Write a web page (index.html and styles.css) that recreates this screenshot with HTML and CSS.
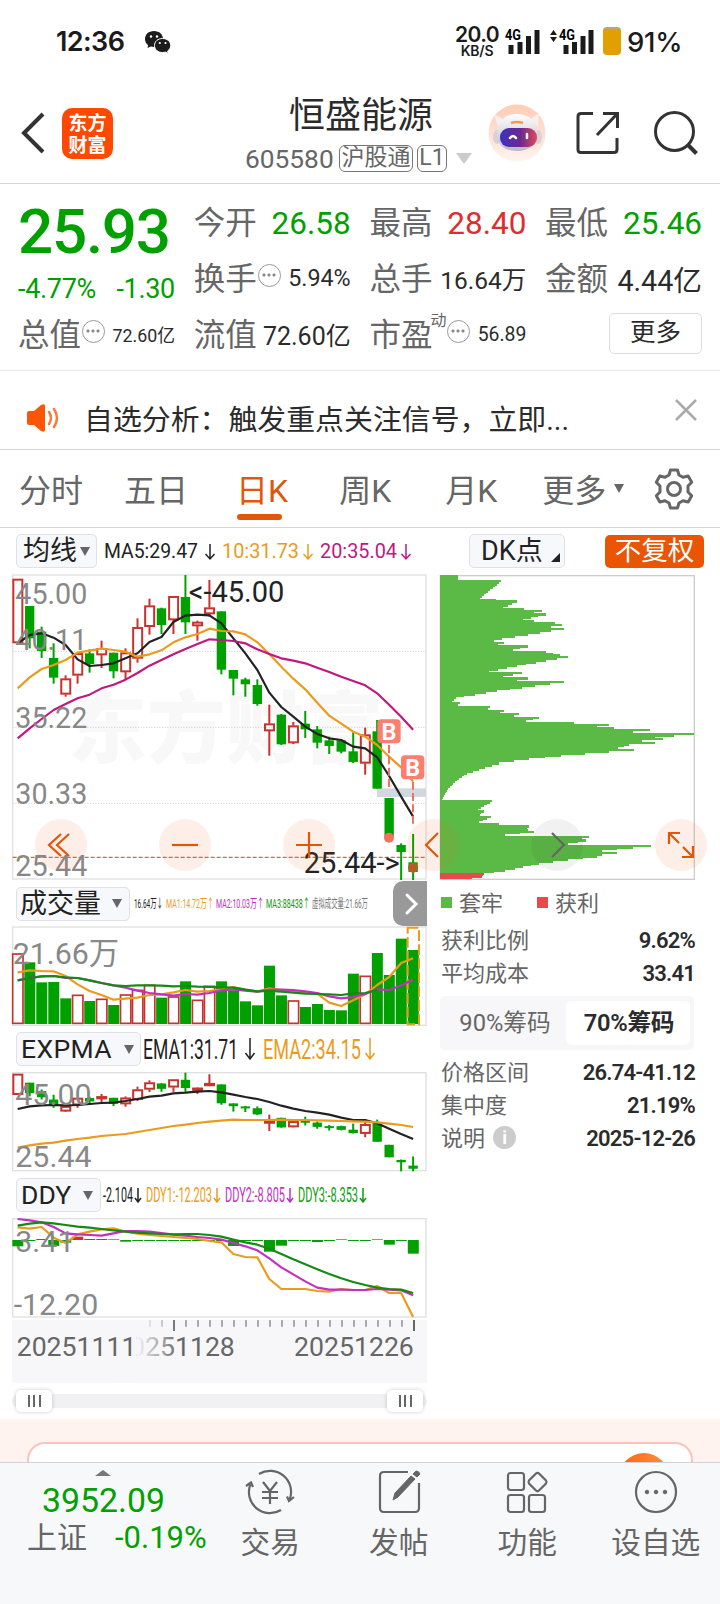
FILE: index.html
```html
<!DOCTYPE html>
<html lang="zh-CN">
<head>
    <meta charset="UTF-8">
    <meta name="viewport" content="width=device-width, initial-scale=1.0">
    <title>恒盛能源 605580</title>
    <link rel="stylesheet" href="styles.css">
</head>
<body>
    <div class="status-bar">
        <span class="clock">12:36</span>
        <svg class="wechat" width="28" height="24" viewBox="0 0 28 24">
            <path fill="#1b1b1b" d="M10 1C4.500 1 1 4.600 1 9c0 2.600 1.200 4.700 3.200 6.200L3.500 18l3.300-1.500c1 .3 2 .5 3.200.5 5.500 0 9-3.600 9-8s-3.500-8-9-8z"/>
            <path fill="#1b1b1b" stroke="#fff" stroke-width="1" d="M18.500 8.500c-4.700 0-8 3-8 7s3.300 7 8 7c1 0 2-.2 2.800-.4l3 1.400-.7-2.500c1.900-1.300 3.100-3.200 3.100-5.500 0-4-3.500-7-8.200-7z"/>
            <g fill="#fff"><circle cx="7" cy="6.500" r="1.200"/><circle cx="13" cy="6.500" r="1.200"/><circle cx="15.800" cy="13" r="1.100"/><circle cx="21.500" cy="13" r="1.100"/></g>
        </svg>
        <div class="speed"><b>20.0</b><i>KB/S</i></div>
        <svg class="signal" width="36" height="30" viewBox="0 0 36 30">
            <text x="0" y="13" textLength="16" lengthAdjust="spacingAndGlyphs">4G</text>
            <path d="M6 18v9M15 15v12M23.500 9v18M32 3v24"/>
        </svg>
        <svg class="signal signal2" width="46" height="30" viewBox="0 0 46 30">
            <path class="tri" d="M1 8l3.500-5L8 8zM1 10h7l-3.500 5z"/>
            <text x="10" y="13" textLength="16" lengthAdjust="spacingAndGlyphs">4G</text>
            <path d="M17 18v9M25.500 15v12M34 9v18M42 3v24"/>
        </svg>
        <div class="battery"></div>
        <span class="percent">91%</span>
    </div>

    <div class="header">
        <svg class="back" width="26" height="44" viewBox="0 0 26 44"><path d="M23 3L4 22l19 19"/></svg>
        <div class="logo">东方<br>财富</div>
        <div class="title">
            <h1>恒盛能源</h1>
            <p><span>605580</span><em>沪股通</em><em class="lv">L1</em><i class="drop"></i></p>
        </div>
        <svg class="robot" width="58" height="58" viewBox="0 0 58 58">
            <defs>
                <linearGradient id="halo" x1="0" y1="0" x2="0" y2="1"><stop offset="0" stop-color="#ffccb5"/><stop offset="1" stop-color="#fff4ef"/></linearGradient>
                <linearGradient id="visor"><stop offset="0" stop-color="#3f2fc0"/><stop offset=".55" stop-color="#6a2a90"/><stop offset="1" stop-color="#e04858"/></linearGradient>
                <linearGradient id="helmet" x1="0" y1="0" x2="0" y2="1"><stop offset="0" stop-color="#fff"/><stop offset="1" stop-color="#b9b8c6"/></linearGradient>
            </defs>
            <circle cx="29" cy="29" r="28.500" fill="url(#halo)"/>
            <path fill="#f4eff2" d="M10 22L6 10l9 5zM43 15l8-6-1 14z"/>
            <ellipse cx="9" cy="33" rx="4" ry="7" fill="#d8d0da"/><ellipse cx="50" cy="33" rx="4" ry="7" fill="#d8d0da"/>
            <path fill="url(#helmet)" d="M29 10c13 0 20 8 20 20 0 10-7 17-20 17S9 40 9 30c0-12 7-20 20-20z"/>
            <rect x="12" y="24" width="37" height="19" rx="9" fill="url(#visor)"/>
            <path d="M23 19q6-2 12 0" stroke="#f39a50" stroke-width="2.500" fill="none"/>
            <path d="M22 34q3-4 6 0M39 30v4" stroke="#fff" stroke-width="2.500" fill="none" stroke-linecap="round"/>
        </svg>
        <svg class="line-icon share" width="44" height="44" viewBox="0 0 44 44"><path d="M17 2.500H5q-3 0-3 3v33q0 3 3 3h33q3 0 3-3V27M27 2.500h14.500V17M41 3L21 24"/></svg>
        <svg class="line-icon" width="46" height="46" viewBox="0 0 46 46"><circle cx="21.500" cy="21.500" r="19"/><path d="M35 35l8.500 8.500" stroke-width="4"/></svg>
    </div>

    <div class="quote">
        <div class="price-box">
            <div class="price">25.93</div>
            <div class="change"><span>-4.77%</span><span>-1.30</span></div>
        </div>
        <div class="cell"><label>今开</label><b class="down s31">26.58</b></div>
        <div class="cell"><label>最高</label><b class="up s31">28.40</b></div>
        <div class="cell"><label>最低</label><b class="down s31">25.46</b></div>
        <div class="cell"><label>换手</label><i class="dots"></i><b class="s23">5.94%</b></div>
        <div class="cell"><label>总手</label><b class="s24">16.64万</b></div>
        <div class="cell"><label>金额</label><b class="s28">4.44亿</b></div>
        <div class="cell"><label>总值</label><i class="dots"></i><b class="s18">72.60亿</b></div>
        <div class="cell"><label>流值</label><b class="s25">72.60亿</b></div>
        <div class="cell"><label>市盈</label><sup>动</sup><i class="dots"></i><b class="s19">56.89</b></div>
        <div class="cell end"><button class="more">更多</button></div>
    </div>

    <div class="notice">
        <svg width="34" height="28" viewBox="0 0 34 28">
            <path fill="#fb5607" d="M1 9q0-2 2-2h5l7-6q4-2 4 1v24q0 3-4 1l-7-6H3q-2 0-2-2z"/>
            <path fill="none" stroke="#fb7a3c" stroke-width="2.500" stroke-linecap="round" d="M23 8q4 6 0 12M28 5q6 9 0 18"/>
        </svg>
        <span>自选分析：触发重点关注信号，立即...</span>
        <svg class="close" width="24" height="24" viewBox="0 0 24 24"><path d="M2 2l20 20M22 2L2 22"/></svg>
    </div>

    <div class="tabs">
        <a>分时</a><a>五日</a><a class="active">日K</a><a>周K</a><a>月K</a><a>更多<i></i></a>
        <svg class="gear" width="40" height="42" viewBox="0 0 40 42">
            <path d="M15 7l1.500-5h7L25 7l4 2.300 5.200-1.300 3.500 6.200-3.700 3.800v6l3.700 3.800-3.500 6.200-5.200-1.300L25 35l-1.500 5h-7L15 35l-4-2.300L5.800 34l-3.500-6.200L6 24v-6l-3.700-3.800L5.800 8 11 9.300z"/>
            <circle cx="20" cy="21" r="6.500"/>
        </svg>
    </div>

    <div class="toolbar top">
        <button class="pick pick-ma">均线<i></i></button>
        <svg class="labels" width="320" height="34" viewBox="0 0 320 34">
            <text x="7" y="24" textLength="94" lengthAdjust="spacingAndGlyphs" fill="#222">MA5:29.47</text>
            <text x="125" y="24" textLength="77" lengthAdjust="spacingAndGlyphs" fill="#eb9b1c">10:31.73</text>
            <text x="223" y="24" textLength="77" lengthAdjust="spacingAndGlyphs" fill="#c0187f">20:35.04</text>
            <path stroke="#222" d="M113 10v15M108.500 20l4.500 5 4.500-5"/>
            <path stroke="#eb9b1c" d="M211 10v15M206.500 20l4.500 5 4.500-5"/>
            <path stroke="#c0187f" d="M309 10v15M304.500 20l4.500 5 4.500-5"/>
        </svg>
        <button class="pick pick-dk">DK点<i></i></button>
        <button class="adjust">不复权</button>
    </div>

    <div class="charts">
        <div class="left">
            <svg id="kline" width="430" height="310" viewBox="0 0 1290 930"></svg>
            <div class="toolbar vol-bar">
                <button class="pick pick-vol">成交量<i></i></button>
                <svg class="labels" width="240" height="34" viewBox="0 0 240 34">
                    <g font-size="12.500">
                        <text x="4" y="21" textLength="29" lengthAdjust="spacingAndGlyphs" fill="#222">16.64万↓</text>
                        <text x="36" y="21" textLength="48" lengthAdjust="spacingAndGlyphs" fill="#eb9b1c">MA1:14.72万↑</text>
                        <text x="86" y="21" textLength="48" lengthAdjust="spacingAndGlyphs" fill="#c22fc2">MA2:10.03万↑</text>
                        <text x="136" y="21" textLength="44" lengthAdjust="spacingAndGlyphs" fill="#119a11">MA3:88438↑</text>
                        <text x="182" y="21" textLength="56" lengthAdjust="spacingAndGlyphs" fill="#777">虚拟成交量:21.66万</text>
                    </g>
                </svg>
                <div class="next"><svg width="16" height="24" viewBox="0 0 16 24"><path d="M3 3l9 9-9 9"/></svg></div>
            </div>
            <svg id="volume" width="430" height="103" viewBox="0 150 1290 309"></svg>
            <div class="toolbar exp-bar">
                <button class="pick pick-exp">EXPMA<i></i></button>
                <svg class="labels" width="250" height="34" viewBox="0 0 250 34">
                    <g font-size="28.500">
                        <text x="2" y="27" textLength="95" lengthAdjust="spacingAndGlyphs" fill="#222">EMA1:31.71</text>
                        <text x="122" y="27" textLength="98" lengthAdjust="spacingAndGlyphs" fill="#eb9b1c">EMA2:34.15</text>
                    </g>
                    <path stroke="#222" stroke-width="2" d="M109 6v21M104.500 21l4.500 6 4.500-6"/>
                    <path stroke="#eb9b1c" stroke-width="2" d="M229 6v21M224.500 21l4.500 6 4.500-6"/>
                </svg>
            </div>
            <svg id="expma" width="430" height="102" viewBox="0 120 1290 306"></svg>
            <div class="toolbar ddy-bar">
                <button class="pick pick-ddy">DDY<i></i></button>
                <svg class="labels" width="280" height="34" viewBox="0 0 280 34">
                    <g font-size="20">
                        <text x="2" y="24" textLength="30" lengthAdjust="spacingAndGlyphs" fill="#222">-2.104</text>
                        <text x="45" y="24" textLength="66" lengthAdjust="spacingAndGlyphs" fill="#eb9b1c">DDY1:-12.203</text>
                        <text x="124" y="24" textLength="60" lengthAdjust="spacingAndGlyphs" fill="#c22fc2">DDY2:-8.805</text>
                        <text x="197" y="24" textLength="60" lengthAdjust="spacingAndGlyphs" fill="#119a11">DDY3:-8.353</text>
                    </g>
                    <path stroke="#222" d="M37 10v14M34 20l3 4 3-4"/>
                    <path stroke="#eb9b1c" d="M116 10v14M113 20l3 4 3-4"/>
                    <path stroke="#c22fc2" d="M189 10v14M186 20l3 4 3-4"/>
                    <path stroke="#119a11" d="M262 10v14M259 20l3 4 3-4"/>
                </svg>
            </div>
            <svg id="ddy" width="430" height="103" viewBox="0 33 1290 309"></svg>
            <svg id="axis" width="430" height="65" viewBox="0 342 1290 195"></svg>
            <div class="slider"><span class="handle"><i></i></span><span class="handle"><i></i></span></div>
        </div>

        <div class="right">
            <svg id="chips" width="290" height="310" viewBox="15 150 870 930"></svg>
            <div class="legend"><i class="g"></i><span>套牢</span><i class="r"></i><span>获利</span></div>
            <dl>
                <dt>获利比例</dt><dd>9.62%</dd>
                <dt>平均成本</dt><dd>33.41</dd>
            </dl>
            <div class="switch"><span>90%筹码</span><span class="on">70%筹码</span></div>
            <dl>
                <dt>价格区间</dt><dd>26.74-41.12</dd>
                <dt>集中度</dt><dd>21.19%</dd>
                <dt>说明<i class="info">i</i></dt><dd>2025-12-26</dd>
            </dl>
        </div>

        <div class="controls">
            <span><svg viewBox="0 0 52 52"><path d="M26 15L14 26l12 11M34 15L22 26l12 11"/></svg></span>
            <span><svg viewBox="0 0 52 52"><path d="M13 26h26"/></svg></span>
            <span><svg viewBox="0 0 52 52"><path d="M13 26h26M26 13v26"/></svg></span>
            <span><svg viewBox="0 0 52 52"><path d="M31 14L19 26l12 12"/></svg></span>
            <span class="gray"><svg viewBox="0 0 52 52"><path d="M21 14l12 12-12 12"/></svg></span>
            <span><svg viewBox="0 0 52 52"><path d="M14 25V14h11M14 14l10 10M38 27v11H27M38 38L28 28" stroke-width="2.500"/></svg></span>
        </div>
    </div>

    <div class="promo"><div class="promo-card"><i></i></div></div>

    <div class="bottom">
        <div class="index">
            <i class="arrow-up"></i>
            <div class="point">3952.09</div>
            <div class="rate"><span>上证</span><b>-0.19%</b></div>
        </div>
        <div class="nav">
            <svg width="50" height="46" viewBox="0 0 50 46"><path d="M14 5A21 21 0 0 1 44.700 30.300M36 41A21 21 0 0 1 5.300 15.700M1 17l5-3.500 2 4.500M49 28l-5 4-2-4.500M18 13l7 9 7-9M17 23h16M17 29h16M25 22v13"/></svg>
            交易
        </div>
        <div class="nav">
            <svg width="46" height="46" viewBox="0 0 46 46"><path d="M32 3H8q-4 0-4 4v32q0 4 4 4h31q4 0 4-4V14"/><path class="fill" d="M17 31l2-7L35 7l4 3-17 18zM37 5l3-3q3 0 4 3l-3 3z"/></svg>
            发帖
        </div>
        <div class="nav">
            <svg width="46" height="46" viewBox="0 0 46 46"><rect x="4" y="4" width="16" height="17" rx="2.500"/><rect x="4" y="26" width="16" height="17" rx="2.500"/><rect x="25" y="26" width="16" height="17" rx="2.500"/><path d="M32 4.500q1.500-1.500 3 0l7 7q1 1.500 0 3l-7 7q-1.500 1.500-3 0l-7-7q-1-1.500 0-3z"/></svg>
            功能
        </div>
        <div class="nav">
            <svg width="46" height="46" viewBox="0 0 46 46"><circle cx="23" cy="23" r="20"/><g class="fill"><circle cx="14" cy="23" r="1.800"/><circle cx="23" cy="23" r="1.800"/><circle cx="32" cy="23" r="1.800"/></g></svg>
            设自选
        </div>
    </div>

    <script src="script.js"></script>
</body>
</html>
```
FILE: styles.css
```css
* {
    box-sizing: border-box;
}

body {
    margin: 0;
    width: 720px;
    height: 1604px;
    overflow: hidden;
    background: #fff;
    color: #2b2b2b;
    font-family: Roboto, "Noto Sans CJK SC", sans-serif;
}

svg { display: block; flex: none; }
i, em { font-style: normal; }
button { font-family: inherit; padding: 0; }

/* 状态栏 */
.status-bar {
    height: 84px;
    padding: 0 37px 0 56px;
    display: flex;
    align-items: center;
    color: #1b1b1b;
}
.clock { font: 600 27px/30px Inter, sans-serif; letter-spacing: -0.6px; width: 88px; }
.wechat { margin-right: auto; }
.speed { text-align: center; width: 46px; margin-right: 5px; }
.speed b { display: block; font: 600 21px/16px Inter, sans-serif; letter-spacing: -0.6px; }
.speed i { display: block; font: 600 14px/15px Inter, sans-serif; letter-spacing: -0.2px; }
.signal path { stroke: #1b1b1b; stroke-width: 5; }
.signal path.tri { stroke: none; fill: #1b1b1b; }
.signal text { font: 700 14px Roboto, sans-serif; }
.signal { margin-right: 8px; margin-top: -1px; }
.battery {
    width: 18px;
    height: 28px;
    background: #e2a000;
    border-radius: 4px;
    border-top: 2px solid #b5a57c;
    margin-top: -2px;
}
.percent { margin-left: 6px; font: 500 27.500px/30px Inter, sans-serif; letter-spacing: -0.3px; width: 56px; }

/* 标题栏 */
.header {
    height: 100px;
    border-bottom: 1px solid #d4d4d4;
    display: flex;
    align-items: center;
    padding: 0 22px 0 20px;
    position: relative;
}
.header > svg, .logo { margin-top: -1px; flex: none; }
.back path { fill: none; stroke: #333; stroke-width: 4; }
.logo {
    width: 51px;
    height: 51px;
    margin-left: 16px;
    border-radius: 10px;
    background: #ff4800;
    color: #fff;
    text-align: center;
    padding-top: 3px;
    font: 700 19px/22px "Noto Sans CJK SC", sans-serif;
}
.title {
    width: 240px;
    margin-left: 127px;
    margin-right: 8px;
    text-align: center;
    flex: none;
}
.title h1 { margin: 5px 0 0; font-size: 36px; line-height: 42px; font-weight: 400; padding-left: 2px; }
.title p { margin: 7px 0 4px 5px; display: flex; align-items: center; color: #666; font-size: 26.300px; line-height: 30px; height: 30px; }
.title span { width: 93px; text-align: left; }
.title em {
    height: 27px;
    width: 74px;
    line-height: 24px;
    font-size: 23px;
    border: 1px solid #777;
    border-radius: 6px;
    margin-right: 4px;
    margin-left: 1px;
}
.title em.lv { width: 30px; margin-left: 0; }
.drop { border: 8px solid transparent; border-top: 11px solid #ccc; border-bottom: 0; margin-left: 5px; }
.line-icon { fill: none; stroke: #333; stroke-width: 3; }
.share { margin: 0 33px 0 30px; }

/* 行情 */
.quote {
    height: 187px;
    border-bottom: 1px solid #e8e8e8;
    padding: 11px 18px 0;
    display: grid;
    grid-template-columns: repeat(4, 157px);
    grid-template-rows: 56px 56px 56px;
    column-gap: 18.700px;
}
.price-box { grid-row: span 2; color: #00a000; }
.price { font-size: 62px; font-weight: 500; line-height: 74px; letter-spacing: -1.300px; }
.change { display: flex; justify-content: space-between; font-size: 27px; line-height: 30px; margin-top: 5px; letter-spacing: -0.3px; }
.cell { display: flex; align-items: center; white-space: nowrap; }
.cell label { font-size: 31.500px; color: #666; line-height: 40px; margin-top: 2px; }
.cell b { font-weight: 400; margin-left: auto; margin-top: -2px; color: #2b2b2b; }
.cell b.down { color: #00a000; }
.cell b.up { color: #dd2e2e; }
.cell b.s31 { font-size: 31.500px; margin-top: 0; }
.s28 { font-size: 28.700px; }
.s25 { font-size: 25px; }
.s24 { font-size: 24.500px; }
.s23 { font-size: 23.300px; }
.s19 { font-size: 19.400px; }
.s18 { font-size: 17.800px; }
.cell sup { font-size: 16px; color: #666; align-self: flex-start; line-height: 22px; margin-top: 3px; margin-left: -2px; }
.dots {
    width: 23px;
    height: 23px;
    border: 1.500px solid #999;
    border-radius: 50%;
    margin-left: 1px;
    margin-top: -7px;
    background: radial-gradient(circle at 5px 10px, #888 1.300px, transparent 1.800px),
        radial-gradient(circle at 10px 10px, #888 1.300px, transparent 1.800px),
        radial-gradient(circle at 15px 10px, #888 1.300px, transparent 1.800px);
}
.cell.end { justify-content: flex-end; }
.more {
    width: 93px;
    height: 41px;
    margin-top: -4px;
    border: 1px solid #ddd;
    border-radius: 5px;
    background: #fff;
    color: #2b2b2b;
    font-size: 25.500px;
    line-height: 30px;
    padding-bottom: 2px;
}

/* 公告 */
.notice {
    height: 79px;
    border-bottom: 1px solid #d4d4d4;
    display: flex;
    align-items: center;
    padding: 16px 22px 0 26px;
    font-size: 28.900px;
}
.notice span { margin-left: 24px; margin-top: -3px; }
.close { margin-left: auto; margin-top: -16px; stroke: #aaa; stroke-width: 2.500; }

/* 周期切换 */
.tabs {
    height: 78px;
    border-bottom: 1px solid #d4d4d4;
    display: flex;
    align-items: center;
    padding: 0 26px 0 19px;
    font-size: 32px;
    color: #666;
}
.tabs a { margin-right: 41px; margin-top: -2px; position: relative; white-space: nowrap; }
.tabs a:nth-child(3) { margin-left: 7px; margin-right: 51px; }
.tabs a:nth-child(4) { margin-right: 54px; }
.tabs a:nth-child(5) { margin-right: 45px; }
.tabs a:nth-child(6) { margin-right: 0; }
.tabs .active { color: #e0560b; }
.tabs .active::after {
    content: "";
    position: absolute;
    left: 1px;
    bottom: -9px;
    width: 45px;
    height: 6px;
    border-radius: 3px;
    background: #e0560b;
}
.tabs i { display: inline-block; border: 5.500px solid transparent; border-top: 9px solid #666; border-bottom: 0; margin-left: 8px; vertical-align: 9px; }
.gear { margin-left: auto; fill: none; stroke: #666; stroke-width: 3; stroke-linejoin: round; }

/* 指标栏 */
.toolbar { display: flex; align-items: center; padding-left: 16px; position: relative; }
.toolbar.top { height: 42px; padding-top: 4px; }
.vol-bar { height: 45px; padding-top: 2px; }
.exp-bar { height: 42px; }
.ddy-bar { height: 44px; padding-top: 2px; }
.pick {
    height: 34px;
    border: 1px solid #dfe1e6;
    border-radius: 5px;
    background: #f7f8fb;
    color: #222;
    font-size: 27px;
    line-height: 30px;
    display: flex;
    align-items: center;
    justify-content: space-between;
    flex: none;
}
.pick i { border: 5.500px solid transparent; border-top: 9px solid #666; border-bottom: 0; }
.pick-ma { width: 81px; padding: 0 6px; }
.pick-vol { width: 114px; padding: 0 7px 0 3px; }
.pick-exp { width: 125px; padding: 0 6px 0 4px; font-size: 26.500px; letter-spacing: 0.4px; }
.pick-ddy { width: 85px; padding: 0 7px 0 4px; font-size: 26.500px; }
.pick-dk { width: 96px; padding: 0 4px 0 11px; margin-left: 52px; font-size: 27px; }
.pick-dk i { border: 0; border-left: 9px solid transparent; border-bottom: 9px solid #222; margin-top: 12px; }
.adjust { width: 99px; height: 33px; margin-left: 40px; border: 0; border-radius: 5px; background: #ea5504; color: #fff; font-size: 26.500px; line-height: 30px; }
.labels text { font-family: "Roboto", "Noto Sans CJK SC", sans-serif; }
.toolbar.top .labels text { font-size: 20px; }
.labels path { fill: none; stroke-width: 1.500; }
.next {
    position: absolute;
    left: 393px;
    top: 1px;
    width: 34px;
    height: 45px;
    background: #999;
    border-radius: 10px 0 0 10px;
    display: flex;
    align-items: center;
    justify-content: center;
    padding-left: 4px;
}
.next path { fill: none; stroke: #fff; stroke-width: 3; stroke-linecap: round; }

.charts { display: flex; position: relative; height: 849px; }
.charts text { font-family: Roboto, "Noto Sans CJK SC", sans-serif; }
.left { width: 430px; }
.right { width: 290px; }
.frame { fill: none; stroke: #e0e0e0; stroke-width: 4; }
.line { fill: none; stroke-width: 6.500; stroke-linejoin: round; }
.scale { fill: #888; font-size: 86px; }
.scale.big { font-size: 91px; }
.mark { fill: #222; font-size: 87px; }
.wm { fill: #f8f8f8; font-size: 236px; font-weight: 900; }

/* 图表上的操作按钮 */
.controls { position: absolute; left: 35px; top: 249px; display: flex; gap: 72px; }
.controls span { width: 52px; height: 52px; border-radius: 50%; background: rgba(240, 100, 20, 0.1); }
.controls path { fill: none; stroke: #e0560b; stroke-width: 2.200; }
.controls .gray { background: rgba(60, 60, 60, 0.07); }
.controls .gray path { stroke: #666; }

.slider {
    margin: 10px 3px 0 12px;
    height: 14px;
    border-radius: 7px;
    background: #f1f1f3;
    display: flex;
    justify-content: space-between;
    align-items: center;
    padding: 0 4px;
}
.handle { width: 36px; height: 22px; background: #fff; border-radius: 5px; box-shadow: 0 0 4px rgba(0, 0, 0, 0.2); display: flex; align-items: center; justify-content: center; }
.handle i { width: 13px; height: 12px; border: 2px solid #666; border-width: 0 2px; background: linear-gradient(#666, #666) center / 2px 100% no-repeat; }

/* 筹码分布 */
.legend { height: 45px; display: flex; align-items: center; font-size: 22px; color: #666; padding-left: 11px; }
.legend i { width: 11px; height: 11px; margin-right: 7px; background: #5bba46; }
.legend span { margin-top: -3px; }
.legend .r { background: #e64a4a; margin-left: 34px; }
dl { margin: 0 25px 0 11px; display: grid; grid-template-columns: auto auto; grid-auto-rows: 33px; align-items: center; font-size: 22px; }
.legend + dl { margin-top: -1px; }
dt { color: #666; display: flex; align-items: center; padding-bottom: 5px; }
dd { margin: 0; text-align: right; font-weight: 600; letter-spacing: -0.8px; color: #2b2b2b; }
dl .info { width: 23px; height: 23px; border-radius: 50%; background: #ccc; color: #fff; font-size: 18px; line-height: 23px; font-weight: 700; text-align: center; margin: 2px 0 0 8px; }
.switch { width: 254px; height: 54px; margin: 6px 0 6px 10px; background: #f7f7fa; border-radius: 5px; display: flex; padding: 5px 4px; font-size: 23.700px; color: #666; }
.switch span { flex: 1; text-align: center; line-height: 44px; }
.switch .on { background: #fff; border-radius: 5px; color: #2b2b2b; font-weight: 600; letter-spacing: -0.3px; padding-left: 2px; }

/* 底部 */
.promo { height: 43px; background: #fff3ef; padding: 23px 27px 0; overflow: hidden; }
.promo-card { height: 60px; border: 2px solid #f8c4ba; border-radius: 18px; background: #fff; position: relative; }
.promo-card i { position: absolute; right: 22px; top: 9px; width: 50px; height: 50px; border-radius: 50%; background: linear-gradient(90deg, #ff6512, #ff9040); }
.bottom { height: 142px; border-top: 1px solid #d0d2d6; background: #f7f8fa; display: flex; color: #666; }
.index { width: 206px; position: relative; padding: 19px 0 0 27px; white-space: nowrap; }
.arrow-up { position: absolute; left: 95px; top: 7px; border: 8px solid transparent; border-bottom: 6px solid #777; border-top: 0; }
.point { font-size: 33.800px; line-height: 38px; color: #00a000; padding-left: 15px; }
.rate { display: flex; align-items: center; font-size: 30px; line-height: 38px; margin-top: -1px; }
.rate b { font-weight: 400; color: #00a000; font-size: 31px; margin-left: 28px; }
.nav { width: 128.500px; display: flex; flex-direction: column; align-items: center; font-size: 29.700px; line-height: 40px; padding-top: 6px; }
.nav svg { fill: none; stroke: #666; stroke-width: 2.200; margin-bottom: 8px; }
.nav .fill { fill: #666; stroke-width: 1; }
```
FILE: script.js
```js
const RED = '#c8322f', GREEN = '#00a000', ORANGE = '#eb9b1c', PURPLE = '#c0187f', PINK = '#c22fc2', DGREEN = '#138a13';
const STEP = 35.95;
const cx = i => 53 + i * STEP;

// 颜色, 最高, 实体上沿, 实体下沿, 最低
const candles = [
    ['r',27,27,219,219],['g',108,108,205,235],['g',170,185,243,264],['g',220,264,323,341],['r',316,326,373,380],
    ['r',248,250,316,341],['g',238,250,282,308],['r',212,235,255,294],['g',248,248,304,325],['r',235,248,306,330],
    ['r',145,172,265,278],['r',86,107,170,194],['g',113,115,165,192],['r',79,79,150,192],['g',15,81,157,192],
    ['r',152,156,168,212],['r',30,113,132,140],['g',124,124,299,313],['g',300,300,326,376],['g',323,328,343,380],
    ['g',328,345,402,407],['r',404,461,483,557],['g',432,434,523,525],['r',456,467,519,522],['g',423,461,478,504],
    ['g',468,478,518,535],['g',500,511,528,552],['g',507,511,545,550],['g',487,544,576,579],['r',473,494,580,614],
    ['g',450,484,656,656],['g',684,684,800,800],['g',820,825,846,930],['g',792,877,906,930]
];

const rect = (x, y, w, h, fill, extra = '') => `<rect x="${x}" y="${y}" width="${w}" height="${h}" fill="${fill}" ${extra}/>`;
const line = (ys, color) => `<polyline class="line" stroke="${color}" points="${ys.map((y, i) => cx(i) + ',' + y).join(' ')}"/>`;
const vline = (x, a, b, color, extra = '') => `<path d="M${x} ${a}V${b}" stroke="${color}" stroke-width="6" ${extra}/>`;
const text = (cls, x, y, s) => `<text class="${cls}" x="${x}" y="${y}">${s}</text>`;
const frame = (a, b) => `<rect class="frame" x="38" y="${a}" width="1240" height="${b - a}"/>`;

function drawCandles(f) {
    return candles.map(([c, hi, top, bot, lo], i) => {
        const x = cx(i), t = f(top), b = f(bot);
        if (c === 'g') return vline(x, f(hi), f(lo), GREEN) + rect(x - 14, t, 28, Math.max(b - t, 6), GREEN);
        return vline(x, f(hi), t, RED) + vline(x, b, f(lo), RED) +
            rect(x - 13, t + 2, 27, Math.max(b - t - 4, 4), 'none', `stroke="${RED}" stroke-width="6"`);
    }).join('');
}

function badge(x, y) {
    return `<rect x="${x - 35}" y="${y - 36}" width="70" height="72" rx="12" fill="#fa7f70"/>` +
        `<text x="${x}" y="${y + 25}" text-anchor="middle" font-size="70" font-weight="700" fill="#fff">B</text>`;
}

const dash = 'stroke-dasharray="24 10"';
document.getElementById('kline').innerHTML =
    text('wm', 205, 560, '东方财富') + frame(15, 927) +
    [244, 472, 700].map(y => `<path d="M38 ${y}H1278" stroke="#ccc" stroke-width="3" stroke-dasharray="3 5"/>`).join('') +
    rect(1131, 655, 147, 26, '#d3d7de') + drawCandles(y => y) +
    line([220,195,190,203,225,268,288,285,280,265,250,216,201,156,137,134,136,160,205,250,300,368,411,440,470,492,505,510,530,535,562,618,680,740], '#222') +
    line([355,322,297,285,270,248,242,236,240,245,260,253,241,217,202,192,176,183,184,193,217,252,290,326,358,398,437,461,485,500,525,560,592,635], ORANGE) +
    line([505,475,447,420,402,385,374,355,344,329,309,287,270,253,237,222,208,210,213,220,238,252,265,272,280,293,306,320,333,346,370,404,440,479], PURPLE) +
    vline(1167, 525, 655, '#f4705f', dash) + vline(1239, 635, 765, '#f4705f', dash) +
    badge(1167, 484) + badge(1238, 592) +
    '<circle cx="1167" cy="803" r="15" fill="#fa6e5c"/><circle cx="1239" cy="893" r="15" fill="#b85c20"/>' +
    `<path d="M38 862H1278" stroke="#d07030" stroke-width="4" stroke-dasharray="12 6"/>` +
    text('scale', 46, 101, '45.00') + text('scale', 46, 241, '40.11') + text('scale', 46, 474, '35.22') +
    text('scale', 46, 702, '30.33') + text('scale', 46, 917, '25.44') +
    text('mark', 566, 95, '&lt;-45.00') + text('mark', 911, 910, '25.44-&gt;');

const vols = 'r235 g262 g322 g321 g370 r359 g378 r371 g390 r358 r344 r329 g368 r364 g319 r374 r332 g319 g346 g379 g391 g272 g361 r376 g396 g387 g405 g406 g296 r302 g234 g300 g191 g225'.split(' ');
document.getElementById('volume').innerHTML = frame(156, 451) +
    vols.map((v, i) => {
        const y = +v.slice(1), x = cx(i) - 16;
        return v[0] === 'g' ? rect(x, y, 33, 447 - y, GREEN) : rect(x + 1, y + 2, 31, 443 - y, '#fff', `stroke="${RED}" stroke-width="5"`);
    }).join('') +
    `<rect x="1223" y="158" width="34" height="290" fill="none" stroke="${ORANGE}" stroke-width="6" stroke-dasharray="32 10"/>` +
    line([292,286,288,289,303,328,348,360,374,371,368,360,358,352,345,350,348,343,336,344,350,340,345,350,353,356,383,393,376,358,330,306,264,250], ORANGE) +
    line([316,309,304,303,309,309,316,324,331,338,347,354,358,362,357,359,354,346,343,347,350,344,344,345,349,354,364,370,366,357,343,345,331,314], PINK) +
    line([316,309,304,303,307,309,316,324,331,333,331,331,332,334,333,335,336,337,338,344,349,348,350,353,356,357,358,360,355,354,345], DGREEN) +
    text('scale big', 38, 267, '21.66万');

document.getElementById('expma').innerHTML = frame(128, 422) + drawCandles(y => 128 + (y - 15) * 0.3235) +
    line([237,229,226,225,226,225,222,219,218,213,207,200,197,190,188,185,183,187,194,201,207,216,227,236,243,248,254,263,270,270,280,296,312,327], '#222') +
    line([353,346,341,338,332,327,323,318,315,312,306,300,294,288,284,279,275,272,269,270,270,270,269,270,270,271,272,273,274,275,277,281,285,291], ORANGE) +
    text('scale big', 46, 226, '45.00') + text('scale big', 46, 410, '25.44');

const flows = [19,3,-3,18,8,-10,-3,-3,-2,5,3,3,3,3,3,3,3,3,18,3,3,35,17,3,3,6,3,-2,3,3,-2,14,3,41];
document.getElementById('ddy').innerHTML = frame(41, 336) +
    flows.map((v, i) => rect(cx(i) - 16, v > 0 ? 105 : 105 + v, 33, Math.abs(v), v > 0 ? GREEN : RED)).join('') +
    line([67,71,66,98,114,88,80,73,70,80,86,90,93,96,99,102,108,112,147,156,157,222,252,252,252,258,260,252,255,255,243,264,264,336], ORANGE) +
    line([42,46,52,66,85,88,90,92,85,78,78,80,84,89,92,96,99,104,114,124,136,160,187,208,229,248,254,254,255,255,252,254,256,271], PINK) +
    line([62,56,52,55,60,65,68,72,76,80,83,85,87,88,87,87,90,95,104,112,119,131,147,163,178,193,207,220,231,240,248,252,254,264], DGREEN) +
    text('scale big', 46, 140, '3.41') + text('scale big', 41, 330, '-12.20');

let ticks = '';
for (let i = 0; i < 23; i++) {
    const big = i === 2 || i === 22;
    ticks += vline(450 + i * 36, 345, big ? 378 : 365, big ? '#666' : '#aaa');
}
document.getElementById('axis').innerHTML =
    '<defs><linearGradient id="fade"><stop offset="0" stop-color="#f7f7fa"/><stop offset="1" stop-color="#f7f7fa" stop-opacity="0"/></linearGradient></defs>' +
    rect(36, 345, 1245, 188, '#f7f7fa') + ticks +
    `<g font-size="80" fill="#666">${text('', 345, 453, '20251128')}${rect(330, 345, 80, 188, '#f7f7fa')}${rect(409, 345, 130, 188, 'url(#fade)')}${text('', 50, 453, '20251111')}${text('', 882, 453, '20251226')}</g>`;

// 筹码分布: 纵坐标, 右端
const chips = [[167,99],[181,99],[183,228],[187,222],[235,164],[238,212],[243,276],[249,262],[261,234],[265,297],[271,350],[277,328],[282,362],[288,340],[298,295],[303,327],[308,390],[314,410],[319,378],[325,417],[330,378],[342,310],[355,230],[362,206],[367,237],[372,219],[378,308],[384,286],[389,264],[394,362],[405,405],[410,430],[416,395],[432,302],[453,192],[459,292],[468,234],[474,310],[480,277],[485,418],[491,375],[496,330],[512,217],[528,116],[533,92],[543,80],[549,106],[554,100],[560,195],[566,190],[571,237],[576,226],[581,281],[587,267],[592,342],[597,323],[602,303],[607,447],[613,551],[618,515],[624,567],[629,675],[634,625],[640,808],[645,748],[651,690],[656,713],[661,650],[667,689],[672,611],[683,580],[688,626],[693,552],[699,480],[705,407],[716,312],[721,267],[726,222],[732,222],[742,180],[760,125],[780,95],[810,65],[838,52],[841,200],[846,195],[868,160],[873,178],[879,168],[884,165],[889,197],[905,162],[910,222],[916,311],[924,305],[929,310],[934,327],[939,285],[944,240],[949,492],[955,470],[960,482],[966,460],[971,430],[976,678],[982,625],[987,575],[992,530],[998,575],[1003,530],[1008,515],[1019,430],[1024,383],[1030,342],[1045,270],[1056,208],[1060,176],[1070,172],[1074,140],[1079,112]];
let bars = '';
for (let i = 0; i < chips.length - 1; i++) {
    const [y0, x0] = chips[i], [y1, x1] = chips[i + 1];
    const n = Math.max(1, Math.round((y1 - y0) / 5.4));
    for (let k = 0; k < n; k++) {
        const y = y0 + (y1 - y0) * k / n;
        // 跳变处保持上一档宽度
        const w = (x0 === x1 || y1 === 841 ? x0 : x0 + (x1 - x0) * k / n) - 45;
        bars += rect(45, (y - 2).toFixed(1), w.toFixed(1), ((y1 - y0) / n + 1).toFixed(1), y >= 1059 ? '#e64a4a' : '#5bba46');
    }
}
document.getElementById('chips').innerHTML =
    '<rect x="46" y="167" width="762" height="911" fill="none" stroke="#ccc" stroke-width="4"/>' +
    `<g shape-rendering="crispEdges">${bars}</g>`;
```
